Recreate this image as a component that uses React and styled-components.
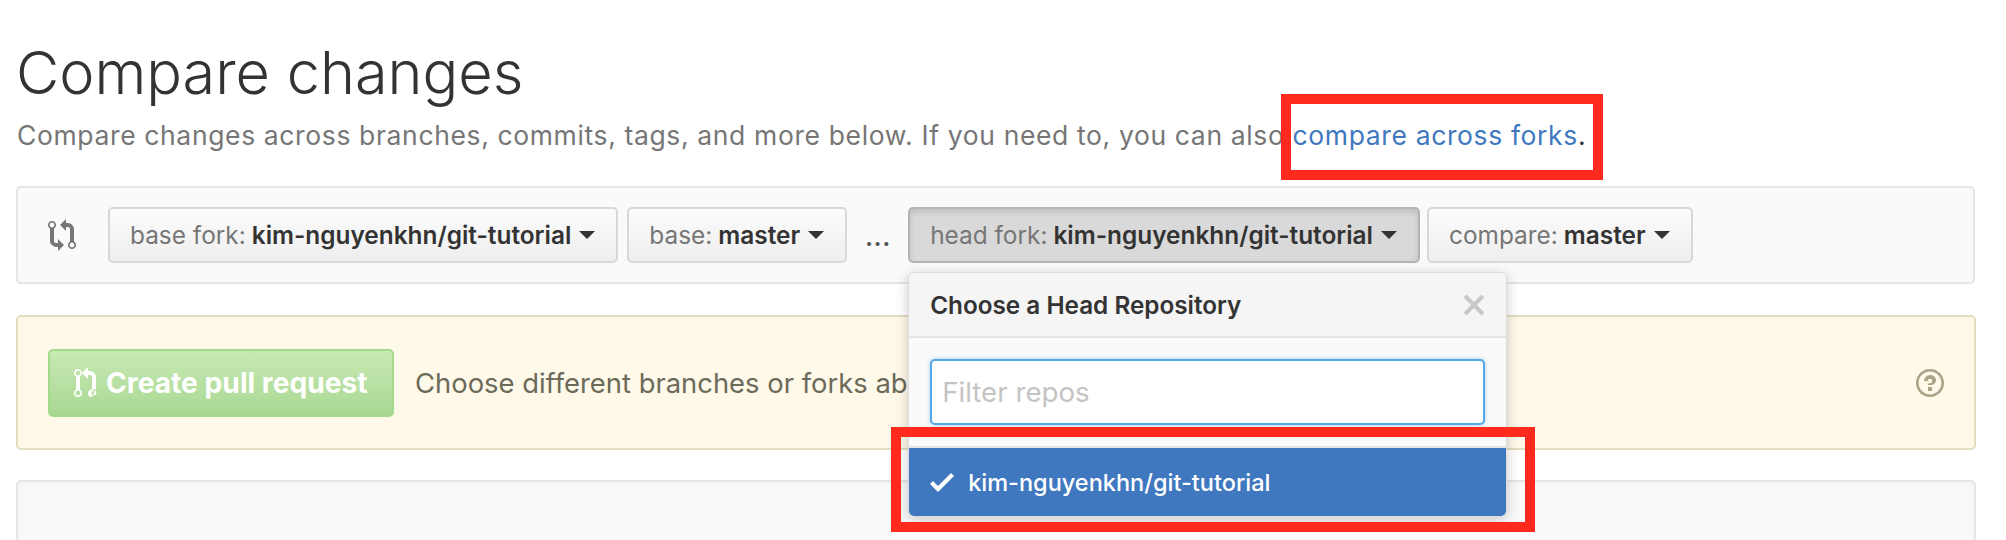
import React from 'react'
import styled, { createGlobalStyle } from 'styled-components'

const GlobalStyle = createGlobalStyle`
  html, body {
    margin: 0;
    height: 540px;
    overflow: hidden;
    background: #fff;
  }
  body {
    font-family: Inter, "Liberation Sans", sans-serif;
  }
`

const Page = styled.div`
  display: flex;
  flex-direction: column;
  height: 540px;
  box-sizing: border-box;
  overflow: hidden;
  padding: 0 30px 0 16px;
`

const Title = styled.h1`
  margin: 36px 0 0 0;
  font-size: 59.4px;
  line-height: 72px;
  font-weight: 300;
  color: #333;
`

const Subtitle = styled.p`
  margin: 9px 0 0 1px;
  font-size: 26.5px;
  line-height: 36px;
  letter-spacing: 0.63px;
  color: #767676;
  white-space: nowrap;
`

const FramedLink = styled.span`
  position: relative;
  color: #333;

  &::after {
    content: '';
    position: absolute;
    top: -25px;
    bottom: -29px;
    left: -12px;
    right: -17px;
    border: 10px solid #fe2a1e;
  }
`

const Link = styled.a`
  color: #4078c0;
`

const CompareBar = styled.div`
  display: flex;
  align-items: center;
  flex: none;
  height: 98px;
  box-sizing: border-box;
  margin: 33px 1px 0 0;
  padding: 0 0 0 30px;
  border: 2px solid #e5e5e5;
  border-radius: 5px;
  background: #fafafa;
`

const CompareIcon = styled.svg`
  width: 28px;
  height: 32px;
  margin-right: 32px;
  fill: #767676;
`

const Dots = styled.span`
  width: 61px;
  text-align: center;
  font-size: 30px;
  color: #555;
`

const RangeWrap = styled.div`
  position: relative;
  margin-right: ${p => p.$gap || 0}px;
`

const RangeButton = styled.button`
  display: flex;
  align-items: center;
  height: 56px;
  box-sizing: border-box;
  padding: 0 21px 0 20px;
  border: 2px solid ${p => (p.$open ? '#b4b4b4' : '#d8d8d8')};
  border-radius: 5px;
  background: ${p => (p.$open ? '#d9d9d9' : 'linear-gradient(#fcfcfc, #eeeeee)')};
  box-shadow: ${p => (p.$open ? 'inset 0 3px 6px rgba(0, 0, 0, 0.12)' : 'none')};
  font-family: inherit;
  font-size: 24.4px;
  white-space: nowrap;
`

const RangeLabel = styled.span`
  color: #767676;
  margin-right: 6px;
`

const RangeValue = styled.span`
  color: #333;
  font-weight: 600;
`

const Caret = styled.span`
  width: 0;
  height: 0;
  margin-left: 8px;
  border-top: 8px solid #333;
  border-left: 8px solid transparent;
  border-right: 8px solid transparent;
`

const Popup = styled.div`
  position: absolute;
  top: 65px;
  left: 0;
  z-index: 2;
  width: 599px;
  height: 245px;
  box-sizing: border-box;
  display: flex;
  flex-direction: column;
  border: 1px solid #dcdcdc;
  border-radius: 5px;
  background: #fafafa;
  box-shadow: 0 3px 14px rgba(0, 0, 0, 0.2);
`

const PopupHeader = styled.div`
  display: flex;
  align-items: center;
  justify-content: space-between;
  height: 65px;
  flex: none;
  box-sizing: border-box;
  padding: 0 20px 0 21px;
  border-bottom: 2px solid #e5e5e5;
  border-radius: 5px 5px 0 0;
  background: #f5f5f5;
  font-size: 24.3px;
  font-weight: 600;
  color: #333;
`

const CloseIcon = styled.svg`
  width: 24px;
  height: 32px;
  fill: #c8c8c8;
`

const FilterWrap = styled.div`
  flex: none;
  height: 110px;
  box-sizing: border-box;
  padding: 21px 21px 0;
  border-bottom: 2px solid #e5e5e5;
`

const FilterInput = styled.input`
  display: block;
  width: 100%;
  height: 66px;
  box-sizing: border-box;
  padding: 0 10px;
  border: 2px solid #51a7e8;
  border-radius: 5px;
  background: #fff;
  box-shadow: 0 0 4px rgba(81, 167, 232, 0.5);
  outline: none;
  font-family: inherit;
  font-size: 27.7px;

  &::placeholder {
    color: #c4c4c4;
    opacity: 1;
  }
`

const SelectedRow = styled.div`
  position: relative;
  display: flex;
  align-items: center;
  gap: 14px;
  flex: 1;
  padding-left: 21px;
  border-radius: 0 0 5px 5px;
  background: #4078c0;
  font-size: 23.5px;
  font-weight: 500;
  color: #fff;

  &::after {
    content: '';
    position: absolute;
    top: -21px;
    bottom: -16px;
    left: -18px;
    right: -29px;
    border: 10px solid #fe2a1e;
    pointer-events: none;
  }
`

const CheckIcon = styled.svg`
  width: 24px;
  height: 32px;
  fill: #fff;
`

const Notice = styled.div`
  display: flex;
  align-items: center;
  flex: none;
  height: 135px;
  box-sizing: border-box;
  margin-top: 31px;
  padding: 0 30px;
  border: 2px solid #e2dcc0;
  border-radius: 5px;
  background: #fff9ea;
`

const CreateButton = styled.button`
  display: flex;
  align-items: center;
  gap: 8px;
  width: 346px;
  height: 68px;
  box-sizing: border-box;
  padding: 0 24px;
  border: 2px solid #a3da8c;
  border-radius: 5px;
  background: linear-gradient(#c8e9b3, #a9d893);
  color: #fff;
  font-family: inherit;
  font-size: 28.2px;
  font-weight: 700;
  white-space: nowrap;
`

const PullIcon = styled.svg`
  width: 24px;
  height: 32px;
  flex: none;
  fill: #fff;
`

const NoticeText = styled.span`
  margin-left: 21px;
  flex: 1;
  font-size: 27.4px;
  color: #6c6a58;
  white-space: nowrap;
`

const HelpIcon = styled.svg`
  width: 28px;
  height: 32px;
  fill: #a8a488;
`

const BlankPanel = styled.div`
  flex: none;
  height: 100px;
  margin-top: 30px;
  border: 2px solid #e5e5e5;
  border-radius: 5px;
  background: #fafafa;
  box-shadow: inset 0 0 10px rgba(0, 0, 0, 0.04);
`

const compare =
  'M5 12H4c-.27-.02-.48-.11-.69-.31-.21-.2-.3-.42-.31-.69V4.72A1.993 1.993 0 0 0 2 1a1.993 1.993 0 0 0-1 3.72V11c.03.78.34 1.47.94 2.06.6.59 1.28.91 2.06.94h1v2l3-3-3-3v2zM2 1.8c.66 0 1.2.55 1.2 1.2 0 .65-.55 1.2-1.2 1.2C1.35 4.2.8 3.65.8 3c0-.65.55-1.2 1.2-1.2zm11 9.48V5c-.03-.78-.34-1.47-.94-2.06-.6-.59-1.28-.91-2.06-.94H9V0L6 3l3 3V4h1c.27.02.48.11.69.31.21.2.3.42.31.69v6.28A1.993 1.993 0 0 0 12 15a1.993 1.993 0 0 0 1-3.72zm-1 2.92c-.66 0-1.2-.55-1.2-1.2 0-.65.55-1.2 1.2-1.2.65 0 1.2.55 1.2 1.2 0 .65-.55 1.2-1.2 1.2z'
const pull =
  'M11 11.28V5c-.03-.78-.34-1.47-.94-2.06C9.46 2.35 8.78 2.03 8 2H7V0L4 3l3 3V4h1c.27.02.48.11.69.31.21.2.3.42.31.69v6.28A1.993 1.993 0 0 0 8 15a1.993 1.993 0 0 0 1-3.72zm-1 2.92c-.66 0-1.2-.55-1.2-1.2 0-.65.55-1.2 1.2-1.2.65 0 1.2.55 1.2 1.2 0 .65-.55 1.2-1.2 1.2zM4 3c0-1.11-.89-2-2-2a1.993 1.993 0 0 0-1 3.72v6.56A1.993 1.993 0 0 0 2 15a1.993 1.993 0 0 0 1-3.72V4.72c.59-.34 1-.98 1-1.72zm-.8 10c0 .66-.55 1.2-1.2 1.2-.65 0-1.2-.55-1.2-1.2 0-.65.55-1.2 1.2-1.2.65 0 1.2.55 1.2 1.2zM2 4.2C1.34 4.2.8 3.65.8 3c0-.65.55-1.2 1.2-1.2.65 0 1.2.55 1.2 1.2 0 .65-.55 1.2-1.2 1.2z'
const help =
  'M6 10h2v2H6v-2zm4-3.5C10 8.64 8 9 8 9H6c0-.55.45-1 1-1h.5c.28 0 .5-.22.5-.5v-1c0-.28-.22-.5-.5-.5h-1c-.28 0-.5.22-.5.5V7H4c0-1.5 1.5-3 3-3s3 1 3 2.5zM7 2.3c3.14 0 5.7 2.56 5.7 5.7s-2.56 5.7-5.7 5.7A5.71 5.71 0 0 1 1.3 8c0-3.14 2.56-5.7 5.7-5.7zM7 1C3.14 1 0 4.14 0 8s3.14 7 7 7 7-3.14 7-7-3.14-7-7-7z'
const check = 'M12 5l-8 8-4-4 1.5-1.5L4 10l6.5-6.5L12 5z'
const close =
  'M7.48 8l3.75 3.75-1.48 1.48L6 9.48l-3.75 3.75-1.48-1.48L4.52 8 .77 4.25l1.48-1.48L6 6.52l3.75-3.75 1.48 1.48L7.48 8z'

const Range = ({ label, value, open, gap, children }) => (
  <RangeWrap $gap={gap}>
    <RangeButton $open={open}>
      <RangeLabel>{label}</RangeLabel>
      <RangeValue>{value}</RangeValue>
      <Caret />
    </RangeButton>
    {children}
  </RangeWrap>
)

export default function App() {
  return (
    <Page>
      <GlobalStyle />
      <Title>Compare changes</Title>
      <Subtitle>
        Compare changes across branches, commits, tags, and more below. If you need to, you can also{' '}
        <FramedLink>
          <Link>compare across forks</Link>.
        </FramedLink>
      </Subtitle>
      <CompareBar>
        <CompareIcon viewBox="0 0 14 16">
          <path d={compare} />
        </CompareIcon>
        <Range label="base fork:" value="kim-nguyenkhn/git-tutorial" gap={9} />
        <Range label="base:" value="master" />
        <Dots>...</Dots>
        <Range label="head fork:" value="kim-nguyenkhn/git-tutorial" open gap={7}>
          <Popup>
            <PopupHeader>
              Choose a Head Repository
              <CloseIcon viewBox="0 0 12 16">
                <path d={close} />
              </CloseIcon>
            </PopupHeader>
            <FilterWrap>
              <FilterInput placeholder="Filter repos" readOnly />
            </FilterWrap>
            <SelectedRow>
              <CheckIcon viewBox="0 0 12 16">
                <path d={check} />
              </CheckIcon>
              kim-nguyenkhn/git-tutorial
            </SelectedRow>
          </Popup>
        </Range>
        <Range label="compare:" value="master" />
      </CompareBar>
      <Notice>
        <CreateButton>
          <PullIcon viewBox="0 0 12 16">
            <path d={pull} />
          </PullIcon>
          Create pull request
        </CreateButton>
        <NoticeText>Choose different branches or forks above to discuss and review changes.</NoticeText>
        <HelpIcon viewBox="0 0 14 16">
          <path d={help} />
        </HelpIcon>
      </Notice>
      <BlankPanel />
    </Page>
  )
}
